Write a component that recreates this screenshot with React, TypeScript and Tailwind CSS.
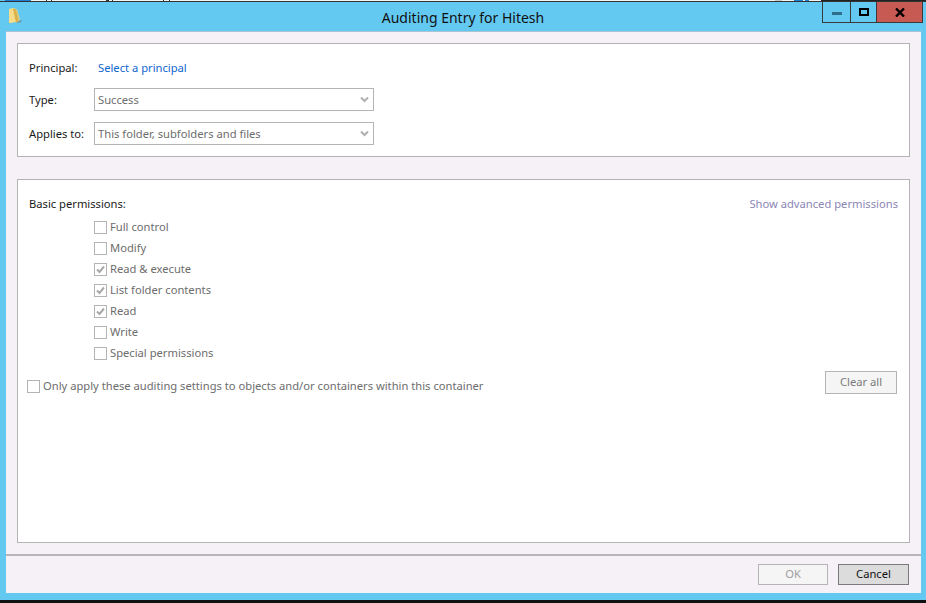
const Check = ({ checked, label }: { checked?: boolean; label: string }) => (
  <div className="flex h-[21px] items-center gap-[3px]">
    <span className="flex h-[13px] w-[13px] items-center justify-center border border-[#b4b4b4] bg-white">
      {checked && (
        <svg width="11" height="11" viewBox="0 0 11 11">
          <path d="M2 5.5 L4.5 8 L9 2.5" fill="none" stroke="#a8a8a8" strokeWidth="2" />
        </svg>
      )}
    </span>
    <span className="text-[#6d6d6d]">{label}</span>
  </div>
);

const Select = ({ value }: { value: string }) => (
  <div className="flex h-[23px] w-[280px] items-center justify-between border border-[#b4b4b4] bg-white pl-[3px] pr-[4px] text-[#6d6d6d]">
    <span className="pt-[1px]">{value}</span>
    <svg width="9" height="7" viewBox="0 0 9 7">
      <path d="M1 1.5 L4.5 5 L8 1.5" fill="none" stroke="#b0b0b0" strokeWidth="2" />
    </svg>
  </div>
);

const strip: [number, string][] = [
  [5, "#63c9f1"],
  [26, "#1e7fd8"],
  [15, "#f4f4f4"],
  [1, "#333333"],
  [4, "#f4f4f4"],
  [1, "#333333"],
  [54, "#f4f4f4"],
  [3, "#333333"],
  [3, "#f4f4f4"],
  [1, "#333333"],
  [50, "#f4f4f4"],
  [1, "#333333"],
  [5, "#f4f4f4"],
  [1, "#333333"],
  [605, "#f4f4f4"],
  [7, "#c8c8c8"],
  [12, "#f4f4f4"],
  [9, "#1e7fd8"],
  [2, "#f4f4f4"],
  [4, "#1e7fd8"],
  [12, "#f4f4f4"],
  [106, "#222222"],
];

export default function App() {
  return (
    <div className="flex h-[603px] w-[926px] flex-col overflow-hidden bg-[#63c9f1] text-[11.2px] text-[#1a1a1a] [font-family:'Noto_Sans','Open_Sans',sans-serif]">
      <div className="flex h-[1px]">
        {strip.map(([w, c], i) => (
          <div key={i} className="h-[1px] shrink-0" style={{ width: w, backgroundColor: c }} />
        ))}
      </div>
      <div className="h-[1px] bg-[#333333]" />
      <div className="flex h-[29px] items-start">
        <div className="w-[105px] pl-[8px] pt-[5px]">
          <svg width="14" height="17" viewBox="0 0 14 17">
            <path d="M1 2 L5 1 L8 2 V15 L3 16 H1 Z" fill="#f5dc8a" />
            <path d="M5 2 H8 L11 14 L8 16 Z" fill="#dcb24a" />
            <path d="M8 2 L9 2 L12 13 L11 14 Z" fill="#f0cf74" />
            <path d="M11 14 L14 13 L13 15 L9 16 Z" fill="#6f8f9c" />
          </svg>
        </div>
        <div className="flex-1 pt-[6px] text-center text-[14px] leading-[20px] text-[#111111]">Auditing Entry for Hitesh</div>
        <div className="flex w-[105px] justify-end pr-[3px]">
          <div className="flex h-[21px] items-stretch border border-t-0 border-[#3a3a3a]">
            <div className="flex w-[28px] items-center justify-center border-r border-[#3a3a3a] pt-[3px]">
              <div className="h-[3px] w-[10px] bg-[#2f6f8c]" />
            </div>
            <div className="flex w-[25px] items-center justify-center">
              <div className="h-[8px] w-[10px] border-2 border-black" />
            </div>
            <div className="flex w-[46px] items-center justify-center border-l border-[#3a3a3a] bg-[#c75a52]">
              <svg width="10" height="9" viewBox="0 0 10 9">
                <path d="M1 0.5 L9 8.5 M9 0.5 L1 8.5" stroke="#000" strokeWidth="2.4" />
              </svg>
            </div>
          </div>
        </div>
      </div>
      <div className="ml-[6px] mr-[5px] flex h-[562px] flex-col border-t border-[#a9c5d4] bg-[#f6f1f6]">
        <div className="flex flex-1 flex-col px-[11px] pt-[11px]">
          <div className="flex h-[114px] flex-col border border-[#b4b4b4] bg-white px-[11px] pt-[12px]">
            <div className="flex h-[24px] items-center">
              <span className="w-[69px]">Principal:</span>
              <span className="text-[#0f66d0]">Select a principal</span>
            </div>
            <div className="mt-[8px] flex items-center">
              <span className="w-[65px] pt-[2px]">Type:</span>
              <Select value="Success" />
            </div>
            <div className="mt-[11px] flex items-center">
              <span className="w-[65px] pt-[2px]">Applies to:</span>
              <Select value="This folder, subfolders and files" />
            </div>
          </div>
          <div className="mt-[22px] flex h-[364px] flex-col border border-[#b4b4b4] bg-white pl-[9px] pr-[11px] pt-[14px]">
            <div className="flex h-[20px] items-center justify-between pl-[2px]">
              <span>Basic permissions:</span>
              <span className="text-[#8a86b4]">Show advanced permissions</span>
            </div>
            <div className="mt-[3px] pl-[67px]">
              <Check label="Full control" />
              <Check label="Modify" />
              <Check checked label="Read & execute" />
              <Check checked label="List folder contents" />
              <Check checked label="Read" />
              <Check label="Write" />
              <Check label="Special permissions" />
            </div>
            <div className="mt-[4px] flex items-center justify-between">
              <div className="pt-[8px]">
                <Check label="Only apply these auditing settings to objects and/or containers within this container" />
              </div>
              <div className="mr-[1px] flex h-[23px] w-[72px] items-center justify-center border border-[#b4b4b4] bg-[#f5f5f5] text-[#7a7a7a]">
                Clear all
              </div>
            </div>
          </div>
        </div>
        <div className="h-[2px] bg-[#b7b5b8]" />
        <div className="flex h-[37px] items-start justify-end gap-[10px] pr-[12px] pt-[8px]">
          <div className="flex h-[21px] w-[70px] items-center justify-center border border-[#b4b4b4] bg-[#f5f5f5] text-[#a0a0a0]">OK</div>
          <div className="flex h-[21px] w-[71px] items-center justify-center border border-[#7a7a7a] bg-[#dcdcdc] text-[#111111]">Cancel</div>
        </div>
      </div>
      <div className="flex-1" />
      <div className="h-[3px] bg-[#111111]" />
    </div>
  );
}
